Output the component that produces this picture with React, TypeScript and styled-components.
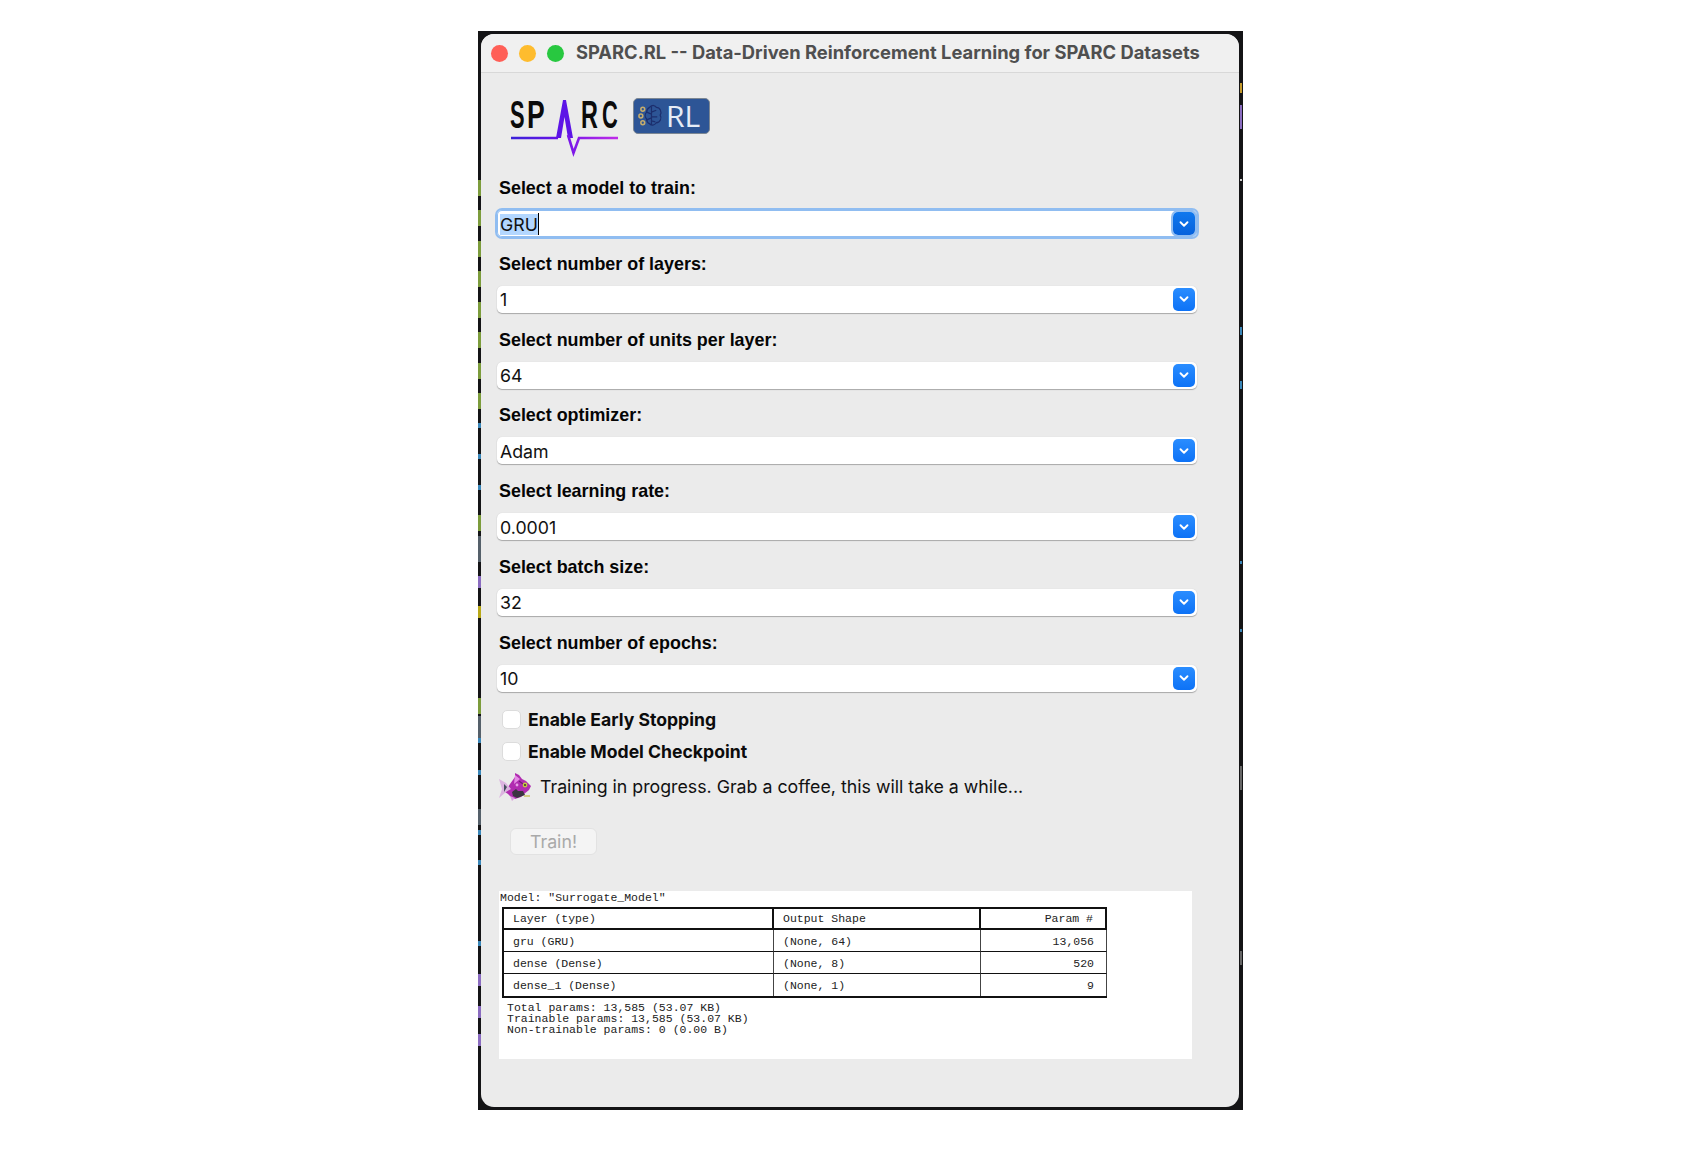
import React from "react";
import styled, { createGlobalStyle } from "styled-components";
import { ChevronDown } from "lucide-react";

const GlobalStyle = createGlobalStyle`
  html, body {
    margin: 0;
    padding: 0;
    background: #fff;
  }
`;

const fields = [
  { label: "Select a model to train:", value: "GRU", focused: true },
  { label: "Select number of layers:", value: "1" },
  { label: "Select number of units per layer:", value: "64" },
  { label: "Select optimizer:", value: "Adam" },
  { label: "Select learning rate:", value: "0.0001" },
  { label: "Select batch size:", value: "32" },
  { label: "Select number of epochs:", value: "10" },
];

const layers = [
  { name: "gru (GRU)", shape: "(None, 64)", params: "13,056" },
  { name: "dense (Dense)", shape: "(None, 8)", params: "520" },
  { name: "dense_1 (Dense)", shape: "(None, 1)", params: "9" },
];

// bits of the desktop that show down the sides of the window
const GREEN = "#7c9c3c";
const BLUE = "#3a86b8";
const PURPLE = "#8a6cc0";
const GREY = "#55606a";
const leftTicks = [
  ...[149, 179, 210, 240, 271, 301, 332, 362, 484, 667].map((top) => ({ top, h: 16, color: GREEN })),
  ...[392, 423, 454, 514, 707, 739, 799, 829, 910].map((top) => ({ top, h: 5, color: BLUE })),
  ...[545, 943, 975, 1003].map((top) => ({ top, h: 12, color: PURPLE })),
  { top: 575, h: 12, color: "#b8a818" },
  { top: 505, h: 26, color: GREY },
  { top: 685, h: 22, color: GREY },
  { top: 778, h: 16, color: GREY },
];
const rightTicks = [
  { top: 52, h: 10, color: "#c49a2c" },
  { top: 74, h: 24, color: PURPLE },
  { top: 148, h: 2, color: "#d0d0d0" },
  { top: 296, h: 8, color: BLUE },
  { top: 350, h: 8, color: BLUE },
  { top: 530, h: 3, color: BLUE },
  { top: 598, h: 3, color: BLUE },
  { top: 735, h: 24, color: "#666" },
  { top: 920, h: 14, color: "#666" },
];

const Logo = () => (
  <LogoRow>
    <svg width="116" height="70" viewBox="0 0 116 70">
      <defs>
        <linearGradient id="pulse" gradientUnits="userSpaceOnUse" x1="1" x2="108" y1="0" y2="0">
          <stop offset="0" stopColor="#3a22d8" />
          <stop offset="0.45" stopColor="#6a12e8" />
          <stop offset="1" stopColor="#c02ce8" />
        </linearGradient>
      </defs>
      <LogoText transform="translate(0 39) scale(0.56 1)">S</LogoText>
      <LogoText transform="translate(17 39) scale(0.68 1)">P</LogoText>
      <LogoText transform="translate(71 39) scale(0.6 1)">R</LogoText>
      <LogoText transform="translate(92 39) scale(0.56 1)">C</LogoText>
      <path d="M46 49L53 11H56L63 49H58L54.5 28L51 49Z" fill="#5d14e6" />
      <path
        d="M1 49H48M58 46L63.5 64L69 49H108"
        fill="none"
        stroke="url(#pulse)"
        strokeWidth="2.6"
      />
    </svg>
    <Badge>
      <svg width="27" height="30" viewBox="0 0 28 30">
        <g fill="none" stroke="#1c2f6e" strokeWidth="1.3">
          <path d="M13 6c3-3 6-2 7 0 4 0 6 5 4 8 2 3 0 8-4 8-2 3-5 3-7 1-2-1-3-3-3-5-2-2-2-5 0-7 0-2 1-4 3-5z" />
          <path d="M15 5v19M15 11l5-2M15 16l6 0M15 20l4 1M10 11l5 2M10 19l5-2" />
        </g>
        <g fill="none" stroke="#c6ad6c" strokeWidth="1.6">
          <circle cx="6" cy="8" r="2" />
          <circle cx="4" cy="15" r="2" />
          <circle cx="6" cy="22" r="2" />
        </g>
      </svg>
      <BadgeText>RL</BadgeText>
    </Badge>
  </LogoRow>
);

const Fish = () => (
  <svg width="33" height="30" viewBox="0 0 33 30">
    <path d="M11 12L16 5l0-4 4 2 3 4 4 2 5 5-2 4-5 4-3 3-6 2-4-2-3-3-3-2z" fill="#b02cb0" />
    <path d="M0 7l7 4 5 6-5 3-7 6 3-9z" fill="#dcb4e0" />
    <path d="M5 12l3 3-3 5z" fill="#46505e" />
    <path d="M16 3l5 4-6 5z" fill="#e58ae5" />
    <path d="M13 20l4-3 2 2 5 0 2 4-8 3-4-2z" fill="#3a3440" />
    <path d="M11 24l5 2-3 3z" fill="#d9a0dc" />
    <circle cx="26" cy="13" r="2.4" fill="#c8c840" />
    <circle cx="26" cy="13" r="1" fill="#333" />
    <circle cx="18" cy="13" r="1.4" fill="#e7a0e7" />
    <path d="M25 24h6" stroke="#c9c25a" strokeWidth="1.4" />
    <path d="M20 9l4 3" stroke="#6f1d78" strokeWidth="1.2" />
  </svg>
);

export default function App() {
  return (
    <>
      <GlobalStyle />
      <Page>
        <Frame>
          {leftTicks.map((t) => (
            <Tick key={`l${t.top}`} $top={t.top} $h={t.h} $color={t.color} />
          ))}
          {rightTicks.map((t) => (
            <Tick key={`r${t.top}`} $right $top={t.top} $h={t.h} $color={t.color} />
          ))}
          <Window>
            <TitleBar>
              <Lights>
                <Light color="#ff5f57" />
                <Light color="#febc2e" />
                <Light color="#28c840" />
              </Lights>
              <Title>SPARC.RL -- Data-Driven Reinforcement Learning for SPARC Datasets</Title>
            </TitleBar>
            <Content>
              <Logo />
              <Fields>
                {fields.map((f) => (
                  <Field key={f.label}>
                    <Label>{f.label}</Label>
                    <Combo $focused={f.focused}>
                      {f.focused ? (
                        <ComboText>
                          <Selected>{f.value}</Selected>
                          <Caret />
                        </ComboText>
                      ) : (
                        <ComboText>{f.value}</ComboText>
                      )}
                      <ComboButton $focused={f.focused}>
                        <ChevronDown size={14} strokeWidth={3.2} color="#fff" />
                      </ComboButton>
                    </Combo>
                  </Field>
                ))}
              </Fields>
              <Checks>
                <CheckRow>
                  <CheckBox />
                  <CheckLabel>Enable Early Stopping</CheckLabel>
                </CheckRow>
                <CheckRow>
                  <CheckBox />
                  <CheckLabel>Enable Model Checkpoint</CheckLabel>
                </CheckRow>
              </Checks>
              <Status>
                <Fish />
                <StatusText>Training in progress. Grab a coffee, this will take a while...</StatusText>
              </Status>
              <TrainButton disabled>Train!</TrainButton>
              <Summary>
                <ModelName>Model: "Surrogate_Model"</ModelName>
                <SummaryTable>
                  <HeadCell>Layer (type)</HeadCell>
                  <HeadCell>Output Shape</HeadCell>
                  <HeadCell $right>Param #</HeadCell>
                  {layers.map((l) => (
                    <React.Fragment key={l.name}>
                      <BodyCell>{l.name}</BodyCell>
                      <BodyCell>{l.shape}</BodyCell>
                      <BodyCell $right>{l.params}</BodyCell>
                    </React.Fragment>
                  ))}
                </SummaryTable>
                <Totals>
                  <div>Total params: 13,585 (53.07 KB)</div>
                  <div>Trainable params: 13,585 (53.07 KB)</div>
                  <div>Non-trainable params: 0 (0.00 B)</div>
                </Totals>
              </Summary>
            </Content>
          </Window>
        </Frame>
      </Page>
    </>
  );
}

const Page = styled.div`
  min-height: 1168px;
  padding: 31px 0 0 478px;
  box-sizing: border-box;
  background: #fff;
`;

const Frame = styled.div`
  position: relative;
  width: 765px;
  height: 1079px;
  box-sizing: border-box;
  padding: 3px 4px 3px 3px;
  background: #141416;
`;

const Tick = styled.span<{ $top: number; $h: number; $color: string; $right?: boolean }>`
  position: absolute;
  ${(p) => (p.$right ? "right: 1px;" : "left: 0;")}
  top: ${(p) => p.$top}px;
  width: ${(p) => (p.$right ? "2px" : "3px")};
  height: ${(p) => p.$h}px;
  background: ${(p) => p.$color};
`;

const Window = styled.div`
  position: relative;
  height: 100%;
  background: #ebebeb;
  border-radius: 13px;
  overflow: hidden;
`;

const TitleBar = styled.div`
  display: flex;
  align-items: center;
  height: 38px;
  padding-left: 10px;
  background: #f0f0f0;
  border-bottom: 1px solid #d8d8d8;
`;

const Lights = styled.div`
  display: flex;
  gap: 11px;
  margin-right: 12px;
`;

const Light = styled.span<{ color: string }>`
  width: 17px;
  height: 17px;
  border-radius: 50%;
  background: ${(p) => p.color};
`;

const Title = styled.div`
  padding-bottom: 2px;
  font: 700 18.33px "Inter", "Liberation Sans", sans-serif;
  color: #4f4f4f;
  white-space: nowrap;
`;

const Content = styled.div`
  display: flex;
  flex-direction: column;
  padding: 16px 0 0 16px;
`;

const LogoRow = styled.div`
  display: flex;
  align-items: flex-start;
  gap: 7px;
  height: 73px;
  padding-left: 13px;
`;

const LogoText = styled.text`
  font: 700 39px "Liberation Sans", sans-serif;
  fill: #0b0b0b;
`;

const Badge = styled.div`
  display: flex;
  align-items: center;
  width: 77px;
  height: 36px;
  margin-top: 9px;
  padding-left: 3px;
  box-sizing: border-box;
  background: #2d5596;
  border: 1px solid #7c8793;
  border-radius: 5px;
`;

const BadgeText = styled.span`
  margin-left: 2px;
  font: 400 30px/1 "Open Sans", sans-serif;
  color: #e6ecf6;
`;

const Fields = styled.div`
  display: flex;
  flex-direction: column;
  gap: 16.8px;
  margin-top: 16px;
`;

const Field = styled.div`
  display: flex;
  flex-direction: column;
  gap: 12px;
`;

const Label = styled.div`
  height: 20px;
  padding-left: 2px;
  font: 700 17.9px/20px "Liberation Sans", sans-serif;
  color: #050505;
`;

const Combo = styled.div<{ $focused?: boolean }>`
  display: flex;
  align-items: center;
  justify-content: space-between;
  width: 700px;
  height: 27px;
  box-sizing: border-box;
  padding: 0 2.5px 0 3px;
  background: #fff;
  border-radius: 5px;
  box-shadow: ${(p) =>
    p.$focused
      ? "0 0 0 2px #90bdf1, inset 0 0 0 1px #90bdf1"
      : "0 1px 1px #a8a8a8, 0 0 1px #c8c8c8"};
`;

const ComboText = styled.div`
  display: flex;
  align-items: center;
  padding-top: 1px;
  font: 400 17.75px "Inter", sans-serif;
  color: #111;
`;

const Selected = styled.span`
  background: #b3d7ff;
`;

const Caret = styled.span`
  width: 1px;
  height: 22px;
  background: #000;
`;

const ComboButton = styled.div<{ $focused?: boolean }>`
  display: flex;
  align-items: center;
  justify-content: center;
  width: 22px;
  height: 23px;
  border-radius: 5px;
  background: ${(p) =>
    p.$focused
      ? "linear-gradient(#0f78ee, #0762dc)"
      : "linear-gradient(#2a8dff, #0d72f6)"};
  box-shadow: ${(p) => (p.$focused ? "0 0 0 2px #90bdf1" : "none")};
`;

const Checks = styled.div`
  display: flex;
  flex-direction: column;
  gap: 13px;
  margin-top: 18.2px;
`;

const CheckRow = styled.div`
  display: flex;
  align-items: center;
  gap: 7px;
  height: 19px;
  padding-left: 5px;
`;

const CheckBox = styled.span`
  width: 19px;
  height: 19px;
  box-sizing: border-box;
  background: #fff;
  border: 1px solid #dcdcdc;
  border-radius: 5px;
`;

const CheckLabel = styled.span`
  font: 700 17.6px "Inter", sans-serif;
  color: #0c0c0c;
`;

const Status = styled.div`
  display: flex;
  align-items: center;
  gap: 8px;
  height: 30px;
  margin-top: 11px;
  padding-left: 2px;
`;

const StatusText = styled.span`
  font: 400 17.75px "Inter", sans-serif;
  color: #111;
`;

const TrainButton = styled.button`
  align-self: flex-start;
  width: 87px;
  height: 27px;
  margin: 26px 0 0 13px;
  padding: 0;
  background: #f4f4f4;
  border: 1px solid #e2e2e2;
  border-radius: 6px;
  font: 400 17.75px "Inter", sans-serif;
  color: #a9a9a9;
`;

const Summary = styled.div`
  width: 693px;
  height: 168px;
  margin: 36px 0 0 2px;
  background: #fff;
  font: 400 11.5px/11px "Liberation Mono", monospace;
  color: #222;
`;

const ModelName = styled.div`
  height: 16px;
  padding-left: 1px;
  line-height: 13px;
`;

const SummaryTable = styled.div`
  display: grid;
  grid-template-columns: 270px 207px 126px;
  width: 605px;
  margin-left: 3px;
  border-bottom: 2px solid #111;
  border-left: 2px solid #111;
  box-sizing: border-box;
`;

const HeadCell = styled.div<{ $right?: boolean }>`
  height: 23px;
  box-sizing: border-box;
  padding: 0 ${(p) => (p.$right ? "12px" : "9px")};
  border-top: 2px solid #111;
  border-bottom: 2px solid #111;
  border-right: 2px solid #111;
  line-height: 20px;
  text-align: ${(p) => (p.$right ? "right" : "left")};
`;

const BodyCell = styled.div<{ $right?: boolean }>`
  height: 22px;
  box-sizing: border-box;
  padding: 1px ${(p) => (p.$right ? "12px" : "9px")} 0;
  border-bottom: 1px solid #111;
  border-right: 1px solid #444;
  line-height: 21px;
  text-align: ${(p) => (p.$right ? "right" : "left")};

  &:nth-last-child(-n + 3) {
    border-bottom: 0;
  }
`;

const Totals = styled.div`
  margin-top: 4px;
  padding-left: 8px;
`;
